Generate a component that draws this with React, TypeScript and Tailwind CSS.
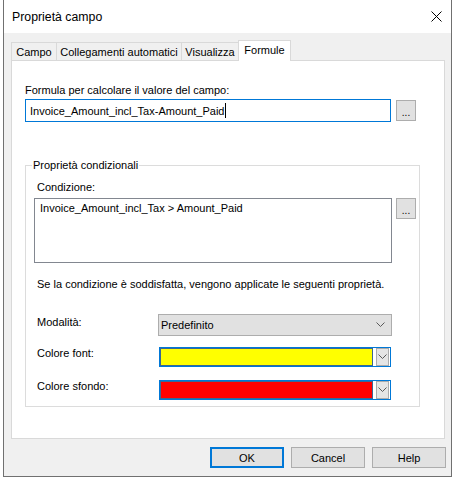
import React from 'react';

const font = { fontFamily: '"Liberation Sans", Arial, sans-serif' };

const Chevron = () => (
  <svg width="9" height="6" viewBox="0 0 9 6" className="block">
    <path d="M0.5 0.5 L4.5 4.5 L8.5 0.5" fill="none" stroke="#5a5a5a" strokeWidth="1" />
  </svg>
);

const DotsButton = ({ className = '' }: { className?: string }) => (
  <div
    className={`w-[20px] h-[21px] bg-[#e1e1e1] border border-[#adadad] flex items-end justify-center pb-[3px] text-[10px] leading-[8px] ${className}`}
  >
    ...
  </div>
);

const ColorCombo = ({ color }: { color: string }) => (
  <div className="w-[232px] h-[20px] border border-[#0078d7] bg-white flex">
    <div className={`w-[213px] h-full border border-[#3b6792] ${color}`} />
    <div className="w-[3px]" />
    <div className="w-[13px] h-full bg-[#e5e5e5] border border-[#acacac] flex items-center justify-center">
      <Chevron />
    </div>
  </div>
);

const tabs = [
  { label: 'Campo', w: 'w-[46px]' },
  { label: 'Collegamenti automatici', w: 'w-[126px]' },
  { label: 'Visualizza', w: 'w-[58px]' },
];

export default function App() {
  return (
    <div className="w-[456px] h-[479px] bg-white text-black text-[11px]" style={font}>
      <div className="ml-[3px] w-[449px] h-[477px] border-l border-r border-b border-[#707070] bg-[#f0f0f0] flex flex-col">
        {/* Title bar */}
        <div className="h-[33px] bg-white flex items-center justify-between pl-[8px] pr-[9px]">
          <span className="text-[12.3px] leading-[16px]">Proprietà campo</span>
          <svg width="11" height="11" viewBox="0 0 11 11">
            <path d="M0.5 0.5 L10.5 10.5 M10.5 0.5 L0.5 10.5" stroke="#000" strokeWidth="1" />
          </svg>
        </div>

        {/* Tabs */}
        <div className="mt-[7px] ml-[7px] flex items-end h-[20px]">
          {tabs.map((t, i) => (
            <div
              key={t.label}
              className={`${t.w} h-[18px] border-t border-l border-r border-[#d9d9d9] bg-[#f0f0f0] flex items-center justify-center leading-[14px] ${i > 0 ? '-ml-px' : ''}`}
            >
              {t.label}
            </div>
          ))}
          <div className="-ml-px w-[53px] h-[21px] -mb-px relative z-10 border-t border-l border-r border-[#d9d9d9] bg-white flex items-start justify-center pt-[2px] leading-[14px]">
            Formule
          </div>
        </div>

        {/* Panel */}
        <div className="ml-[7px] w-[434px] h-[379px] border border-[#d9d9d9] bg-white pl-[13px]">
          <div className="mt-[22px] h-[14px] leading-[14px]">Formula per calcolare il valore del campo:</div>
          <div className="mt-[2px] flex items-start">
            <div className="w-[366px] h-[23px] border border-[#0078d7] flex items-center pl-[4px] leading-[14px]">
              Invoice_Amount_incl_Tax-Amount_Paid
              <span className="inline-block w-px h-[15px] bg-black ml-px" />
            </div>
            <DotsButton className="ml-[5px] mt-px" />
          </div>

          <fieldset className="mt-[36px] w-[395px] h-[249px] border border-[#dcdcdc] m-0 p-0">
            <legend className="ml-[6px] px-[1px] h-[14px] leading-[14px]">Proprietà condizionali</legend>
            <div className="mt-[8px] ml-[11px] h-[14px] leading-[14px]">Condizione:</div>
            <div className="mt-[4px] ml-[8px] flex items-start">
              <div className="w-[358px] h-[65px] border border-[#828790] pl-[5px] pt-[2px] leading-[14px]">
                Invoice_Amount_incl_Tax &gt; Amount_Paid
              </div>
              <DotsButton className="ml-[4px]" />
            </div>
            <div className="mt-[14px] ml-[11px] h-[14px] leading-[14px]">
              Se la condizione è soddisfatta, vengono applicate le seguenti proprietà.
            </div>

            <div className="mt-[23px] ml-[11px] flex items-start">
              <div className="w-[121px] mt-px h-[14px] leading-[14px]">Modalità:</div>
              <div className="w-[234px] h-[22px] bg-[#e1e1e1] border border-[#adadad] flex items-center justify-between pl-[2px] pr-[6px] leading-[14px]">
                Predefinito
                <Chevron />
              </div>
            </div>

            <div className="mt-[11px] ml-[11px] flex items-start">
              <div className="w-[122px] -mt-px h-[14px] leading-[14px]">Colore font:</div>
              <ColorCombo color="bg-[#ffff00]" />
            </div>

            <div className="mt-[13px] ml-[11px] flex items-start">
              <div className="w-[122px] -mt-px h-[14px] leading-[14px]">Colore sfondo:</div>
              <ColorCombo color="bg-[#ff0000]" />
            </div>
          </fieldset>
        </div>

        {/* Buttons */}
        <div className="mt-[8px] mr-[5px] flex justify-end gap-[7px]">
          <button className="w-[74px] h-[21px] bg-[#e1e1e1] border-2 border-[#0078d7] leading-[14px]">OK</button>
          <button className="w-[74px] h-[21px] bg-[#e1e1e1] border border-[#adadad] leading-[14px]">Cancel</button>
          <button className="w-[74px] h-[21px] bg-[#e1e1e1] border border-[#adadad] leading-[14px]">Help</button>
        </div>
      </div>
    </div>
  );
}
